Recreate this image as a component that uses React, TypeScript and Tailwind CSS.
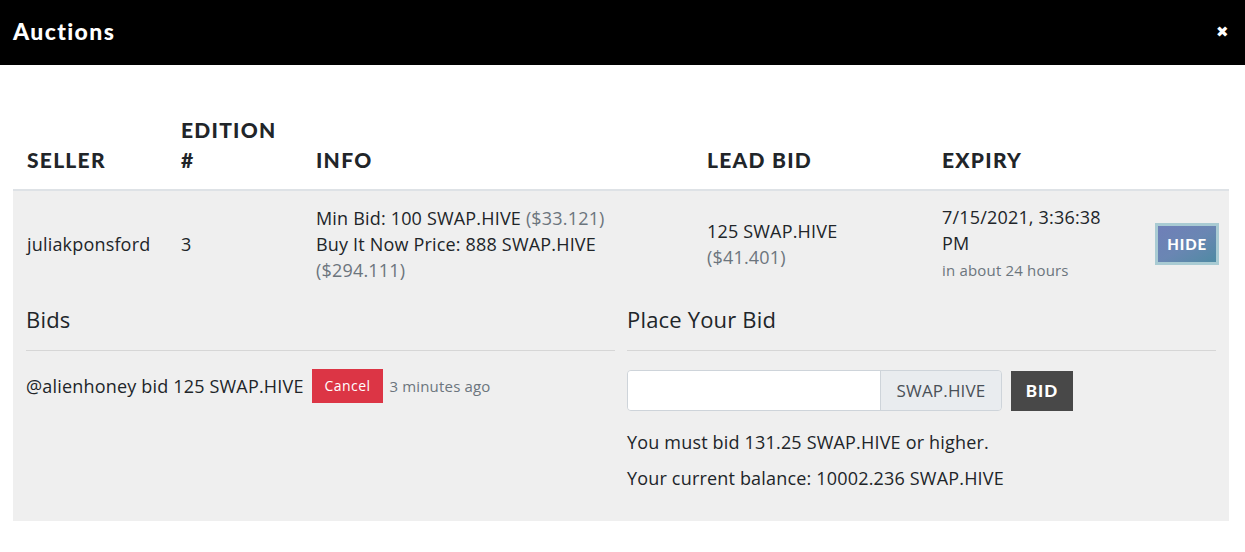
import { useState } from "react";

const heavy = { fontFamily: "Lato, 'Noto Sans', sans-serif" };

function Th({ children, className = "" }: { children: React.ReactNode; className?: string }) {
  return (
    <th
      className={`align-bottom text-left px-[14px] pt-[14px] pb-[14px] text-[21px] leading-[30px] font-black uppercase tracking-[0.06em] text-[#212529] ${className}`}
      style={heavy}
    >
      {children}
    </th>
  );
}

export default function App() {
  const [bid, setBid] = useState("");

  return (
    <div className="min-h-screen bg-white text-[#212529]" style={{ fontFamily: "'Open Sans', sans-serif" }}>
      {/* Header */}
      <div className="h-[65px] bg-black flex items-center justify-between pl-[13px] pr-[16px]">
        <h1 className="text-white text-[23px] font-black tracking-[0.06em] -mt-[3px]" style={heavy}>Auctions</h1>
        <button className="text-white text-[15px] leading-none -mt-[3px]">✖</button>
      </div>

      {/* Table */}
      <div className="pl-[13px] pr-[16px] pt-[36px] pb-[31px]">
        <table className="w-full border-collapse table-fixed">
          <thead>
            <tr className="border-b-2 border-[#dee2e6]">
              <Th className="w-[154px]">Seller</Th>
              <Th className="w-[135px]">
                Edition
                <br />#
              </Th>
              <Th className="w-[391px]">Info</Th>
              <Th className="w-[235px]">Lead Bid</Th>
              <Th className="w-[211px]">Expiry</Th>
              <th className="w-[90px]" />
            </tr>
          </thead>
          <tbody className="bg-[#efefef] text-[18px] leading-[26px] tracking-[0.01em]">
            <tr>
              <td className="px-[14px] py-[13px] align-middle">juliakponsford</td>
              <td className="px-[14px] py-[13px] align-middle">3</td>
              <td className="px-[14px] py-[13px] align-middle">
                Min Bid: 100 SWAP.HIVE <span className="text-[#6c757d]">($33.121)</span>
                <br />
                Buy It Now Price: 888 SWAP.HIVE <span className="text-[#6c757d]">($294.111)</span>
              </td>
              <td className="px-[14px] py-[13px] align-middle">
                125 SWAP.HIVE <span className="text-[#6c757d]">($41.401)</span>
              </td>
              <td className="px-[14px] py-[13px] align-middle">
                <div>7/15/2021, 3:36:38 PM</div>
                <div className="text-[15px] leading-[28px] text-[#6c757d]">in about 24 hours</div>
              </td>
              <td className="pr-[10px] align-middle text-right">
                <button
                  className="inline-block border-[3px] border-[#a9cbd3] bg-gradient-to-br from-[#6f7fb8] via-[#6a86b3] to-[#4e8aa3] text-white text-[15px] leading-[20px] font-black tracking-[0.06em] px-[9px] py-[8px]"
                  style={heavy}
                >
                  HIDE
                </button>
              </td>
            </tr>
            <tr>
              <td colSpan={6} className="px-[13px] pt-[8px] pb-[30px]">
                <div className="grid grid-cols-2 gap-[12px]">
                  {/* Bids */}
                  <div>
                    <h2 className="text-[22px] leading-[28px] pb-[17px] border-b border-[#d6d6d6]">Bids</h2>
                    <div className="flex items-center mt-[18px]">
                      <span>@alienhoney bid 125 SWAP.HIVE</span>
                      <button className="ml-[8px] bg-[#dc3545] text-white text-[14px] leading-[24px] px-[13px] py-[5px] tracking-[0.03em]">
                        Cancel
                      </button>
                      <span className="ml-[6px] text-[15px] text-[#6c757d]">3 minutes ago</span>
                    </div>
                  </div>

                  {/* Place bid */}
                  <div>
                    <h2 className="text-[22px] leading-[28px] pb-[17px] border-b border-[#d6d6d6]">Place Your Bid</h2>
                    <div className="flex items-center mt-[19px] gap-[9px]">
                      <div className="flex h-[41px] w-[375px] border border-[#ced4da] rounded-[4px] overflow-hidden">
                        <input
                          value={bid}
                          onChange={(e) => setBid(e.target.value)}
                          className="flex-1 min-w-0 bg-white px-[12px] outline-none"
                        />
                        <span className="flex items-center w-[121px] justify-center bg-[#e9ecef] border-l border-[#ced4da] text-[#495057] text-[17px]">
                          SWAP.HIVE
                        </span>
                      </div>
                      <button
                        className="h-[40px] w-[62px] bg-[#484848] text-white text-[17px] font-black tracking-[0.06em]"
                        style={heavy}
                      >
                        BID
                      </button>
                    </div>
                    <p className="mt-[18px] leading-[26px]">You must bid 131.25 SWAP.HIVE or higher.</p>
                    <p className="mt-[10px] leading-[26px]">Your current balance: 10002.236 SWAP.HIVE</p>
                  </div>
                </div>
              </td>
            </tr>
          </tbody>
        </table>
      </div>
    </div>
  );
}
